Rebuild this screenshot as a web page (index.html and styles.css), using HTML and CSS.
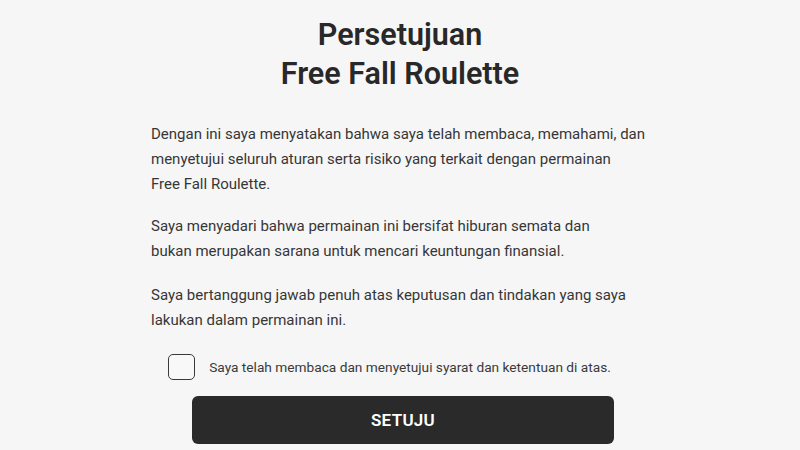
FILE: index.html
```html
<!DOCTYPE html>
<html lang="id">
<head>
<meta charset="utf-8">
<title>Persetujuan - Free Fall Roulette</title>
<link rel="stylesheet" href="styles.css">
</head>
<body>
<main class="consent">
  <h1 class="consent-title">Persetujuan<br>Free Fall Roulette</h1>
  <div class="consent-body">
    <p>Dengan ini saya menyatakan bahwa saya telah membaca, memahami, dan<br>menyetujui seluruh aturan serta risiko yang terkait dengan permainan<br>Free Fall Roulette.</p>
    <p>Saya menyadari bahwa permainan ini bersifat hiburan semata dan<br>bukan merupakan sarana untuk mencari keuntungan finansial.</p>
    <p>Saya bertanggung jawab penuh atas keputusan dan tindakan yang saya<br>lakukan dalam permainan ini.</p>
  </div>
  <label class="agree">
    <input type="checkbox" class="agree-box">
    <span class="agree-text">Saya telah membaca dan menyetujui syarat dan ketentuan di atas.</span>
  </label>
  <button class="agree-btn" type="button">SETUJU</button>
</main>
</body>
</html>
```
FILE: styles.css
```css
html, body {
  margin: 0;
  padding: 0;
  background: #f6f6f6;
}

body {
  font-family: Roboto, "Noto Sans", sans-serif;
  color: #333;
}

.consent {
  width: 500px;
  margin: 0 auto;
  padding-top: 15px;
  display: flex;
  flex-direction: column;
  align-items: center;
}

.consent-title {
  margin: 0;
  text-align: center;
  font-size: 30.5px;
  font-weight: 600;
  line-height: 39px;
  color: #282828;
}

.consent-body {
  align-self: stretch;
  margin-top: 29px;
  padding-left: 1px;
}

.consent-body p {
  margin: 0 0 17px;
  font-size: 15px;
  line-height: 25px;
  color: #363636;
  white-space: nowrap;
}

.consent-body p:nth-child(2) {
  margin-bottom: 19px;
}

.agree {
  display: flex;
  align-items: center;
  gap: 14px;
  margin-top: 4px;
  margin-left: -21px;
  cursor: pointer;
}

.agree-box {
  appearance: none;
  -webkit-appearance: none;
  margin: 0;
  width: 27px;
  height: 26px;
  border: 1.5px solid #3a3a3a;
  border-radius: 5px;
  background: #f8f8f8;
  box-sizing: border-box;
}

.agree-text {
  font-size: 13.7px;
  color: #3a3a3a;
}

.agree-btn {
  margin-top: 16px;
  margin-left: 6px;
  width: 422px;
  height: 48px;
  border: 0;
  border-radius: 6px;
  background: #2a2a2a;
  color: #fff;
  font-family: inherit;
  font-size: 17px;
  font-weight: 600;
  letter-spacing: 0.3px;
}
```
